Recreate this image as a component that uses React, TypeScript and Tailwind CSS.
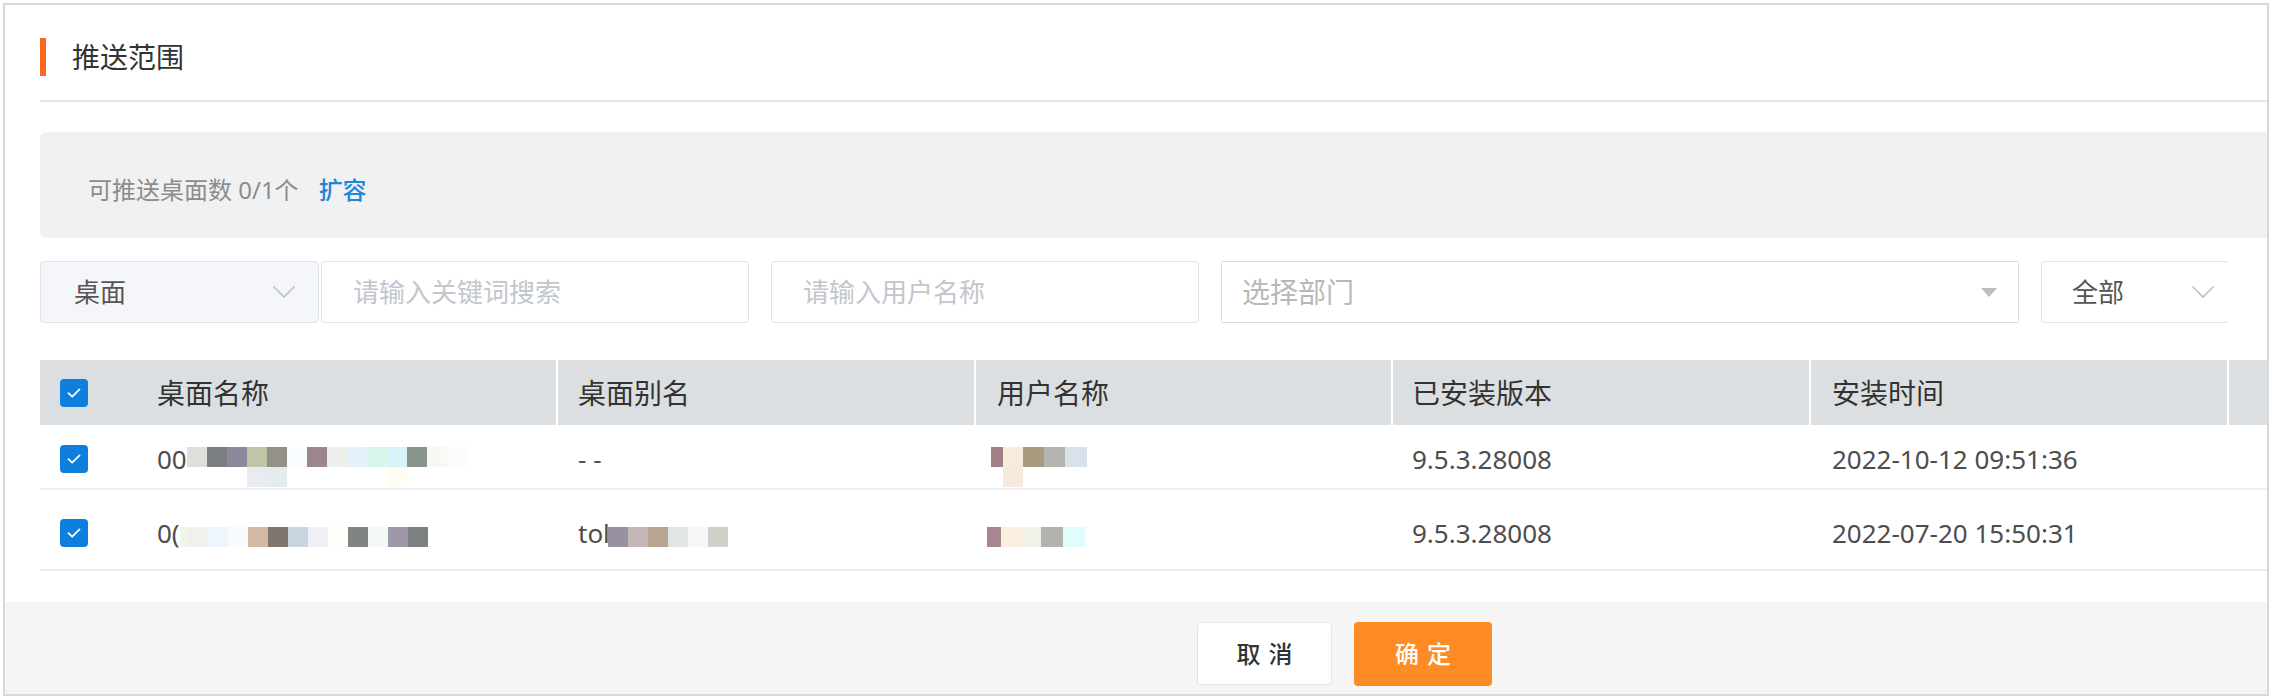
import clsx from "clsx"

type Block = [number, string]

// pixelated (masked) values, each block is 20px on the blur grid
const name1: Block[][] = [
  [
    [20, "#dedfdb"], [20, "#7b7f84"], [20, "#8c899a"], [20, "#c1c5a7"], [20, "#93918a"],
    [20, "#f9fcfe"], [20, "#9b878b"], [20, "#eef0ee"], [20, "#e5f0fb"], [20, "#d6f6ea"],
    [20, "#d7f3fa"], [20, "#879688"], [20, "#f8f9f4"], [20, "#fcfcfc"],
  ],
  [[60, "transparent"], [20, "#e8ebef"], [20, "#e6ecee"], [100, "transparent"], [20, "#fffcf4"]],
]

const name2: Block[][] = [
  [
    [8, "#eef7e5"], [20, "#f2f0ed"], [20, "#eef5fd"], [20, "#f7f9fe"], [20, "#d3b9a3"],
    [20, "#7f766f"], [20, "#c9d4de"], [20, "#eff0f5"], [20, "#fefdf8"], [20, "#808584"],
    [20, "#f4f8f5"], [20, "#9e98a8"], [20, "#7d8081"],
  ],
]

const alias2: Block[][] = [
  [[20, "#9791a1"], [20, "#c4b7b7"], [20, "#baa690"], [20, "#dfe6e4"], [20, "#f6f5f8"], [20, "#cdd1ca"]],
]

const user1: Block[][] = [
  [[12, "#a18088"], [20, "#f6eddd"], [21, "#a89b80"], [21, "#b5b4b0"], [22, "#d9e1ea"]],
  [[12, "transparent"], [20, "#f8e9df"]],
]

const user2: Block[][] = [
  [[14, "#a7868f"], [20, "#faefdf"], [20, "#f1f1ea"], [22, "#b4b2ad"], [22, "#e0fcfc"]],
]

function Mosaic({ rows, className }: { rows: Block[][]; className?: string }) {
  return (
    <div className={clsx("flex flex-col", className)}>
      {rows.map((row, i) => (
        <div key={i} className="flex h-[20px]">
          {row.map(([w, c], j) => (
            <span key={j} style={{ width: w, backgroundColor: c }} />
          ))}
        </div>
      ))}
    </div>
  )
}

function Checkbox() {
  return (
    <span className="w-[28px] h-[28px] rounded-[4px] bg-[#0f7fde] flex items-center justify-center">
      <svg width="16" height="12" viewBox="0 0 16 12" fill="none">
        <path d="M2.5 6.2 L6.2 9.6 L13.5 2.4" stroke="white" strokeWidth="1.8" strokeLinecap="round" strokeLinejoin="round" />
      </svg>
    </span>
  )
}

function Chevron() {
  return (
    <svg width="24" height="14" viewBox="0 0 24 14" fill="none">
      <path d="M1.5 1.5 L12 12 L22.5 1.5" stroke="#bcc0c7" strokeWidth="1.6" />
    </svg>
  )
}

const cols = [
  { title: "桌面名称", w: "w-[421px] pl-[22px]" },
  { title: "桌面别名", w: "w-[418px] pl-[20px] border-l-2 border-white" },
  { title: "用户名称", w: "w-[417px] pl-[21px] border-l-2 border-white" },
  { title: "已安装版本", w: "w-[418px] pl-[19px] border-l-2 border-white" },
  { title: "安装时间", w: "w-[418px] pl-[21px] border-l-2 border-white" },
]

export default function App() {
  return (
    <div className="w-[2276px] h-[700px] bg-white pt-[3px] pl-[3px] font-['Noto_Sans','Noto_Sans_CJK_SC',sans-serif]">
      <div className="w-[2266px] h-[693px] border-2 border-[#d8d8d8] flex flex-col overflow-hidden">
        <div className="pl-[35px]">
          <div className="mt-[33px] h-[38px] flex items-center">
            <span className="w-[6px] h-full bg-[#fb6a1c]" />
            <span className="ml-[26px] text-[28px] leading-none text-[#333]">推送范围</span>
          </div>

          <div className="mt-[24px] h-[2px] bg-[#e1e6ed]" />

          <div className="mt-[30px] h-[106px] rounded-l-[6px] bg-[#f0f1f3] flex items-center pl-[48px] pt-[10px] text-[24px] leading-none">
            <span className="text-[#8c8c8c]">可推送桌面数 0/1个</span>
            <span className="ml-[20px] text-[#1f86d8] font-medium">扩容</span>
          </div>

          {/* filters */}
          <div className="mt-[23px] h-[62px] flex text-[26px] leading-none">
            <div className="w-[279px] flex items-center pl-[33px] pr-[22px] bg-[#f4f6f9] border border-[#dfe3ea] rounded-[4px] text-[#555]">
              <span>桌面</span>
              <span className="ml-auto flex"><Chevron /></span>
            </div>
            <div className="ml-[2px] w-[428px] flex items-center pl-[31px] border border-[#dfe3ec] rounded-[4px] text-[#c2c6cd]">
              请输入关键词搜索
            </div>
            <div className="ml-[22px] w-[428px] flex items-center pl-[31px] border border-[#dfe3ec] rounded-[4px] text-[#c2c6cd]">
              请输入用户名称
            </div>
            <div className="ml-[22px] w-[798px] flex items-center pl-[20px] pr-[21px] border border-[#dcdcdc] rounded-[2px] text-[28px] text-[#b8b8b8]">
              <span>选择部门</span>
              <svg className="ml-auto" width="16" height="9" viewBox="0 0 16 9">
                <path d="M0 0 H16 L8 9 Z" fill="#bdbdbd" />
              </svg>
            </div>
            <div className="ml-[22px] w-[187px] overflow-hidden">
              <div className="h-full flex items-center pl-[30px] pr-[13px] border-y border-l border-[#dfe3ec] rounded-l-[4px] text-[#555]">
                <span>全部</span>
                <span className="ml-auto flex"><Chevron /></span>
              </div>
            </div>
          </div>

          {/* table */}
          <div className="mt-[37px]">
            <div className="h-[65px] flex bg-[#dcdfe1] text-[28px] leading-none text-[#333]">
              <div className="w-[95px] pl-[20px] flex items-center">
                <Checkbox />
              </div>
              {cols.map((c) => (
                <div key={c.title} className={clsx("flex items-center", c.w)}>
                  {c.title}
                </div>
              ))}
              <div className="flex-1 border-l-2 border-white" />
            </div>

            <div className="h-[65px] flex pt-[4px] border-b-2 border-[#e9eef5] text-[26px] leading-none text-[#4d4d4d]">
              <div className="w-[95px] pl-[20px] flex items-center">
                <Checkbox />
              </div>
              <div className="w-[421px] pl-[22px] flex items-center">
                <span>00</span>
                <Mosaic rows={name1} className="translate-y-[8px]" />
              </div>
              <div className="w-[418px] pl-[22px] flex items-center text-[#555]">- -</div>
              <div className="w-[417px] pl-[21px] flex items-center">
                <Mosaic rows={user1} className="-ml-[4px] translate-y-[8px]" />
              </div>
              <div className="w-[418px] pl-[21px] flex items-center">9.5.3.28008</div>
              <div className="w-[418px] pl-[23px] flex items-center">2022-10-12 09:51:36</div>
            </div>

            <div className="h-[81px] flex pt-[6px] border-b-2 border-[#e9eef5] text-[26px] leading-none text-[#4d4d4d]">
              <div className="w-[95px] pl-[20px] flex items-center">
                <Checkbox />
              </div>
              <div className="w-[421px] pl-[22px] flex items-center">
                <span>0(</span>
                <Mosaic rows={name2} className="translate-y-[4px]" />
              </div>
              <div className="w-[418px] pl-[22px] flex items-center">
                <span>tol</span>
                <Mosaic rows={alias2} className="-ml-[2px] translate-y-[4px]" />
              </div>
              <div className="w-[417px] pl-[21px] flex items-center">
                <Mosaic rows={user2} className="-ml-[8px] translate-y-[4px]" />
              </div>
              <div className="w-[418px] pl-[21px] flex items-center">9.5.3.28008</div>
              <div className="w-[418px] pl-[23px] flex items-center">2022-07-20 15:50:31</div>
            </div>
          </div>
        </div>

        {/* footer */}
        <div className="mt-auto h-[92px] bg-[#f5f5f5] flex items-start pt-[20px] pl-[1192px] gap-[22px] text-[24px] leading-none">
          <button className="w-[135px] h-[63px] bg-white border border-[#dfe5ef] rounded-[4px] text-[#333] font-medium tracking-[8px] pl-[8px]">
            取消
          </button>
          <button className="w-[138px] h-[64px] bg-[#ff8b25] rounded-[4px] text-white font-medium tracking-[8px] pl-[8px]">
            确定
          </button>
        </div>
      </div>
    </div>
  )
}
